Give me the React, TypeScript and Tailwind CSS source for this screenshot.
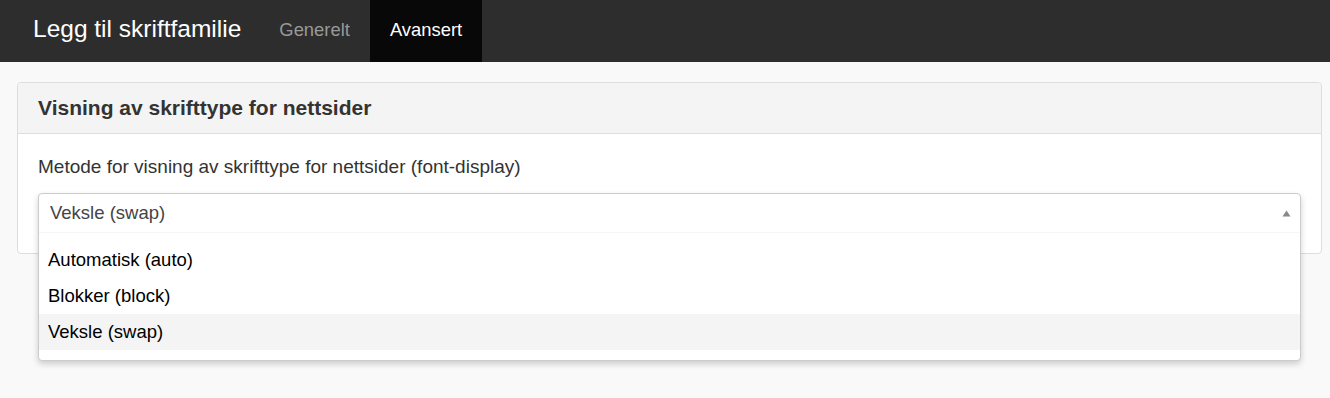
import { useState } from "react"

const options = [
    { label: "Automatisk (auto)", value: "auto" },
    { label: "Blokker (block)", value: "block" },
    { label: "Veksle (swap)", value: "swap" },
]

const App = () => {
    const [selected, setSelected] = useState("swap")
    const current = options.find(o => o.value === selected)

    return (
        <div className="min-h-[398px] bg-[#f9f9f9] text-[#333] font-['Liberation_Sans',Arial,sans-serif]">
            <div className="flex items-stretch h-[62px] bg-[#2d2d2d]">
                <h1 className="flex items-center pl-[33px] pr-[18px] pb-[3px] text-[24.5px] text-white">Legg til skriftfamilie</h1>
                <div className="flex items-center px-5 pb-[3px] text-[18.4px] text-[#999]">Generelt</div>
                <div className="flex items-center px-5 pb-[3px] text-[18.4px] text-white bg-[#080808]">Avansert</div>
            </div>

            <div className="pl-[17px] pr-2 pt-5">
                <div className="border border-[#ddd] rounded bg-white">
                    <div className="h-[51px] flex items-center px-5 bg-[#f4f4f4] border-b border-[#ddd] rounded-t">
                        <h2 className="text-[21px] font-bold text-[#333]">Visning av skrifttype for nettsider</h2>
                    </div>
                    <div className="px-5 pt-5 pb-5 h-[119px]">
                        <div className="text-[19px] leading-[26px] text-[#333] mb-[13px]">Metode for visning av skrifttype for nettsider (font-display)</div>
                        <div className="relative">
                            <div className="absolute left-0 right-0 top-0 z-10 bg-white border border-[#ccc] rounded shadow-[0_3px_6px_rgba(0,0,0,0.18)]">
                                <div className="flex items-center justify-between h-[39px] pl-[11px] pr-[9px] border-b border-[#f6f6f6]">
                                    <span className="text-[18.5px] text-[#444]">{current?.label}</span>
                                    <svg width="9" height="7" viewBox="0 0 9 7"><path d="M4.5 0.5 L8.5 6.5 L0.5 6.5 Z" fill="#888" /></svg>
                                </div>
                                <div className="pt-[9px] pb-[10px]">
                                    {
                                        options.map(o => {
                                            return <div
                                                key={o.value}
                                                onClick={() => setSelected(o.value)}
                                                className={"flex items-center h-9 px-[9px] text-[18.5px] text-black cursor-pointer " + (o.value === selected ? "bg-[#f4f4f4]" : "bg-white")}
                                            >
                                                {o.label}
                                            </div>
                                        })
                                    }
                                </div>
                            </div>
                        </div>
                    </div>
                </div>
            </div>
        </div>
    )
}

export default App
